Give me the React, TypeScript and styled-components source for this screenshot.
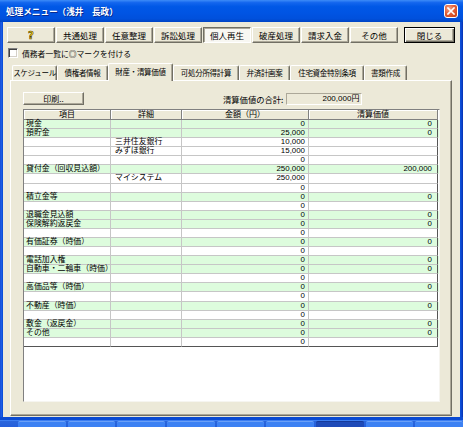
import React from "react";
import styled, { createGlobalStyle } from "styled-components";

const FONT = `"Noto Sans CJK JP", "Noto Sans", sans-serif`;
const CELL_FONT = `"Liberation Sans", "Noto Sans CJK JP", sans-serif`;
const COLS = "87px 71px 127px 129px";

const GlobalStyle = createGlobalStyle`
  html, body { margin: 0; padding: 0; background: #0b4ed6; }
  body { font-family: ${FONT}; color: #000; }
  * { box-sizing: border-box; }
`;

const Window = styled.div`
  width: 463px;
  height: 427px;
  display: flex;
  flex-direction: column;
  overflow: hidden;
  background: linear-gradient(to right, #0838c4 0, #2a6cf0 1px, #0c4ed8 2px, #0c4ed8 calc(100% - 2px), #0630b0 100%);
`;

const TitleBar = styled.div`
  flex: none;
  height: 22px;
  display: flex;
  align-items: center;
  justify-content: space-between;
  padding: 0 5px 0 6px;
  background: linear-gradient(to bottom, #3d8cf7 0%, #1366ee 12%, #0058e6 30%, #0054e3 60%, #0050dc 85%, #0044c4 100%);
`;

const TitleText = styled.span`
  color: #fff;
  font-size: 8.6px;
  font-weight: 700;
  white-space: nowrap;
  text-shadow: 1px 1px 0 #0a2a8e;
`;

const CloseBox = styled.div`
  width: 14px;
  height: 14px;
  border: 1px solid #fff;
  border-radius: 3px;
  display: flex;
  align-items: center;
  justify-content: center;
  background: radial-gradient(circle at 35% 30%, #f4a58a 0%, #e3603a 45%, #c43a10 100%);
`;

const Client = styled.div`
  flex: 1;
  min-height: 0;
  margin: 0 3px;
  background: #ece9d8;
  display: flex;
  flex-direction: column;
`;

const ButtonRow = styled.div`
  display: flex;
  gap: 1px;
  height: 21px;
  padding: 5px 0 0 4px;
`;

const MenuButton = styled.button<{ $pressed?: boolean }>`
  width: 48px;
  height: 16px;
  margin: 0;
  padding: 0;
  font-family: ${FONT};
  font-size: 8.5px;
  line-height: 13px;
  color: #000;
  background: ${(p) => (p.$pressed ? "#f8f7f2" : "#ece9d8")};
  border: 1px solid;
  border-color: ${(p) => (p.$pressed ? "#716f64 #fff #fff #716f64" : "#fff #716f64 #716f64 #fff")};
  box-shadow: ${(p) => (p.$pressed ? "inset 1px 1px 0 #aca899" : "inset -1px -1px 0 #aca899")};
`;

const CloseButton = styled(MenuButton)`
  width: 51px;
  margin-left: 5px;
  border: 1px solid #000;
  box-shadow: inset 1px 1px 0 #fff, inset -1px -1px 0 #716f64, inset -2px -2px 0 #aca899;
`;

const HelpMark = styled.span`
  font-family: "DejaVu Sans", sans-serif;
  font-size: 10px;
  font-weight: 900;
  color: #f7d41c;
  -webkit-text-stroke: 0.6px #5a4800;
`;

const CheckRow = styled.label`
  display: flex;
  align-items: center;
  gap: 4px;
  height: 12px;
  margin: 4px 0 0 5px;
  font-size: 7.8px;
`;

const CheckBox = styled.span`
  width: 10px;
  height: 10px;
  background: #fff;
  border: 1px solid;
  border-color: #808080 #fff #fff #808080;
  box-shadow: inset 1px 1px 0 #404040, inset -1px -1px 0 #d4d0c8;
`;

const TabStrip = styled.div`
  position: relative;
  z-index: 1;
  display: flex;
  align-items: flex-end;
  height: 17px;
  margin-top: 4px;
  padding-left: 9px;
`;

const Tab = styled.div<{ $active?: boolean; $w: number }>`
  width: ${(p) => p.$w}px;
  height: ${(p) => (p.$active ? 18 : 15)}px;
  margin-bottom: ${(p) => (p.$active ? -1 : 0)}px;
  background: #ece9d8;
  border-top: 1px solid #fff;
  border-left: 1px solid #fff;
  border-right: 1px solid #716f64;
  border-radius: 2px 2px 0 0;
  box-shadow: inset -1px 0 0 #aca899;
  font-size: 7.5px;
  letter-spacing: -0.3px;
  line-height: ${(p) => (p.$active ? 15 : 13)}px;
  text-align: center;
  white-space: nowrap;
`;

const TabPanel = styled.div`
  flex: 1;
  min-height: 0;
  margin: 0 8px 1px 7px;
  padding: 11px 0 0 12px;
  display: flex;
  flex-direction: column;
  border: 1px solid;
  border-color: #fff #716f64 #716f64 #fff;
  box-shadow: inset -1px -1px 0 #aca899;
`;

const Toolbar = styled.div`
  display: flex;
  align-items: center;
  height: 13px;
`;

const PrintButton = styled(MenuButton)`
  width: 61px;
  height: 13px;
  font-size: 8px;
  line-height: 10px;
`;

const SumLabel = styled.span`
  margin-left: 139px;
  font-size: 8.3px;
  white-space: nowrap;
`;

const SumBox = styled.div`
  width: 76px;
  height: 12px;
  margin-left: 3px;
  padding-right: 2px;
  border: 1px solid;
  border-color: #aca899 #fff #fff #aca899;
  font-family: ${CELL_FONT};
  font-size: 8px;
  line-height: 10px;
  text-align: right;
`;

const Grid = styled.div`
  width: 417px;
  height: 293px;
  margin-top: 4px;
  background: #fff;
  border-top: 1px solid #808080;
  border-left: 1px solid #808080;
  border-right: 1px solid #f6f5f0;
  border-bottom: 1px solid #f6f5f0;
`;

const HeaderRow = styled.div`
  display: grid;
  grid-template-columns: ${COLS};
  height: 10px;
`;

const HeaderCell = styled.div`
  background: #ece9d8;
  border-right: 1px solid #808080;
  border-bottom: 1px solid #808080;
  box-shadow: inset 1px 1px 0 #fff;
  font-family: ${CELL_FONT};
  font-size: 8px;
  line-height: 9px;
  text-align: center;
  white-space: nowrap;
`;

const Body = styled.div`
  display: flex;
  flex-direction: column;
`;

const Row = styled.div<{ $green?: boolean }>`
  display: grid;
  grid-template-columns: ${COLS};
  height: 9.08px;
  background: ${(p) => (p.$green ? "#ddfcdd" : "#fff")};
  &:last-child > div {
    border-bottom-color: #555;
  }
`;

const Cell = styled.div<{ $right?: boolean; $pad: number }>`
  border-right: 1px solid #c6c6c6;
  border-bottom: 1px solid #c6c6c6;
  font-family: ${CELL_FONT};
  font-size: 7.9px;
  line-height: 8px;
  white-space: nowrap;
  text-align: ${(p) => (p.$right ? "right" : "left")};
  padding: ${(p) => (p.$right ? `0 ${p.$pad}px 0 0` : `0 0 0 ${p.$pad}px`)};
  &:last-child {
    border-right-color: #555;
  }
`;

const BottomFrame = styled.div`
  flex: none;
  height: 4px;
  background: #0b4bd2;
  border-bottom: 1px solid #3c7ef2;
`;

const Taskbar = styled.div`
  flex: none;
  height: 6px;
  display: flex;
  gap: 2px;
  padding-left: 18px;
  background: linear-gradient(#2a66dc, #245edb);
`;

const TaskItem = styled.div<{ $active?: boolean }>`
  width: 48px;
  border-radius: 2px 2px 0 0;
  background: ${(p) => (p.$active ? "#1e4ab8" : "#3c81f3")};
  border-top: 1px solid ${(p) => (p.$active ? "#163a9a" : "#6aa0f7")};
`;

type RowData = { item?: string; detail?: string; amount: string; value?: string; green?: boolean };

const rows: RowData[] = [
  { item: "現金", amount: "0", value: "0", green: true },
  { item: "預貯金", amount: "25,000", value: "0", green: true },
  { detail: "三井住友銀行", amount: "10,000" },
  { detail: "みずほ銀行", amount: "15,000" },
  { amount: "0" },
  { item: "貸付金（回収見込額）", amount: "250,000", value: "200,000", green: true },
  { detail: "マイシステム", amount: "250,000" },
  { amount: "0" },
  { item: "積立金等", amount: "0", value: "0", green: true },
  { amount: "0" },
  { item: "退職金見込額", amount: "0", value: "0", green: true },
  { item: "保険解約返戻金", amount: "0", value: "0", green: true },
  { amount: "0" },
  { item: "有価証券（時価）", amount: "0", value: "0", green: true },
  { amount: "0" },
  { item: "電話加入権", amount: "0", value: "0", green: true },
  { item: "自動車・二輪車（時価）", amount: "0", value: "0", green: true },
  { amount: "0" },
  { item: "高価品等（時価）", amount: "0", value: "0", green: true },
  { amount: "0" },
  { item: "不動産（時価）", amount: "0", value: "0", green: true },
  { amount: "0" },
  { item: "敷金（返戻金）", amount: "0", value: "0", green: true },
  { item: "その他", amount: "0", value: "0", green: true },
  { amount: "0" },
];

const menus = ["共通処理", "任意整理", "訴訟処理", "個人再生", "破産処理", "請求入金", "その他"];

const tabs = [
  { label: "スケジュール", w: 45 },
  { label: "債権者情報", w: 51 },
  { label: "財産・清算価値", w: 65, active: true },
  { label: "可処分所得計算", w: 66 },
  { label: "弁済計画案", w: 51 },
  { label: "住宅資金特別条項", w: 74 },
  { label: "書類作成", w: 43 },
];

const App = () => {
  return (
    <Window>
      <GlobalStyle />
      <TitleBar>
        <TitleText>処理メニュー（浅井　長政）</TitleText>
        <CloseBox>
          <svg width="8" height="8" viewBox="0 0 8 8">
            <path d="M1 1 L7 7 M7 1 L1 7" stroke="#fff" strokeWidth="1.6" strokeLinecap="square" />
          </svg>
        </CloseBox>
      </TitleBar>

      <Client>
        <ButtonRow>
          <MenuButton>
            <HelpMark>?</HelpMark>
          </MenuButton>
          {menus.map((m) => (
            <MenuButton key={m} $pressed={m === "個人再生"}>
              {m}
            </MenuButton>
          ))}
          <CloseButton>閉じる</CloseButton>
        </ButtonRow>

        <CheckRow>
          <CheckBox />
          債務者一覧に◎マークを付ける
        </CheckRow>

        <TabStrip>
          {tabs.map((t) => (
            <Tab key={t.label} $w={t.w} $active={t.active}>
              {t.label}
            </Tab>
          ))}
        </TabStrip>

        <TabPanel>
          <Toolbar>
            <PrintButton>印刷..</PrintButton>
            <SumLabel>清算価値の合計:</SumLabel>
            <SumBox>200,000円</SumBox>
          </Toolbar>

          <Grid>
            <HeaderRow>
              <HeaderCell>項目</HeaderCell>
              <HeaderCell>詳細</HeaderCell>
              <HeaderCell>金額（円）</HeaderCell>
              <HeaderCell>清算価値</HeaderCell>
            </HeaderRow>
            <Body>
              {rows.map((r, i) => (
                <Row key={i} $green={r.green}>
                  <Cell $pad={2}>{r.item}</Cell>
                  <Cell $pad={4}>{r.detail}</Cell>
                  <Cell $right $pad={3}>{r.amount}</Cell>
                  <Cell $right $pad={5}>{r.value}</Cell>
                </Row>
              ))}
            </Body>
          </Grid>
        </TabPanel>
      </Client>

      <BottomFrame />
      <Taskbar>
        {[0, 1, 2, 3, 4, 5, 6, 7, 8].map((n) => (
          <TaskItem key={n} $active={n === 6} />
        ))}
      </Taskbar>
    </Window>
  );
};

export default App;
